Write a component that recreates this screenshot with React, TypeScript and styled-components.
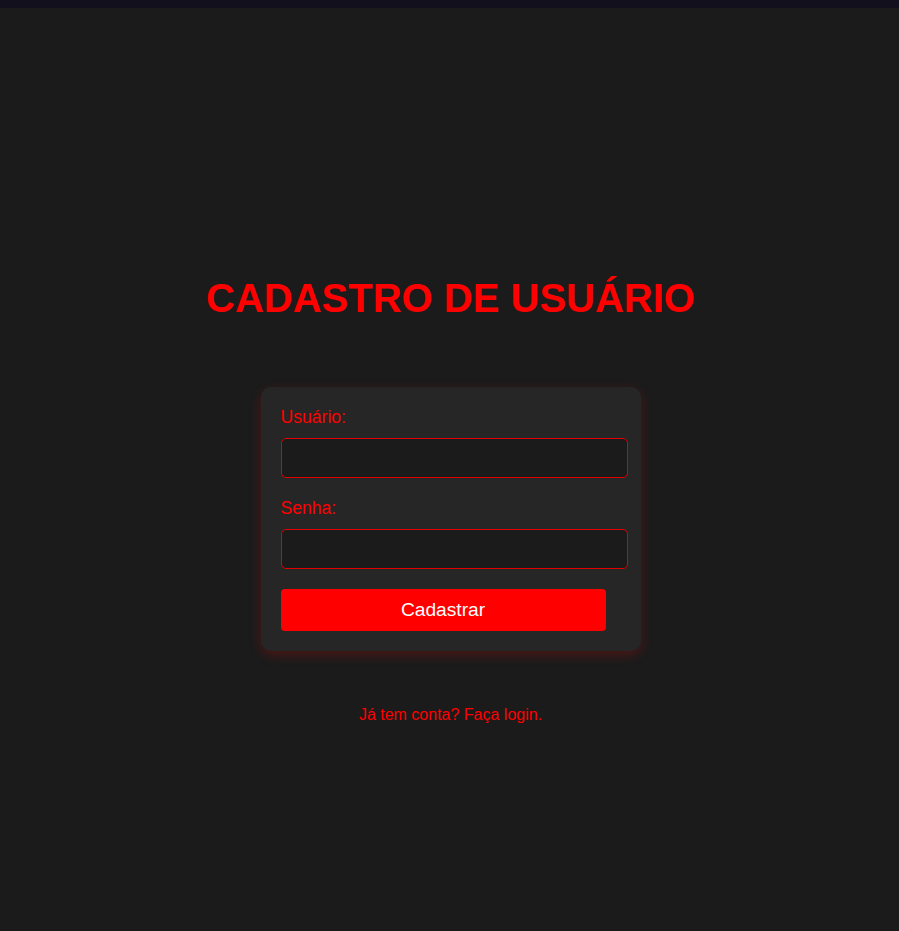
import React from "react";
import styled, { createGlobalStyle } from "styled-components";

const GlobalStyle = createGlobalStyle`
  html, body {
    margin: 0;
    padding: 0;
    background: #1b1b1b;
    font-family: "Liberation Sans", Arial, sans-serif;
  }
`;

const TopBar = styled.div`
  height: 8px;
  background: #11101c;
`;

const Page = styled.main`
  min-height: 923px;
  display: flex;
  flex-direction: column;
  align-items: center;
  padding-top: 267px;
  padding-left: 2px;
  box-sizing: border-box;
`;

const Title = styled.h1`
  margin: 0 0 66px;
  color: #ff0000;
  font-size: 40px;
  line-height: 46px;
  font-weight: 700;
  text-align: center;
`;

const Card = styled.form`
  width: 380px;
  box-sizing: border-box;
  padding: 20px;
  background: #262626;
  border-radius: 10px;
  box-shadow: 0 4px 12px rgba(255, 0, 0, 0.22);
  display: flex;
  flex-direction: column;
`;

const Label = styled.label`
  display: block;
  color: #ff0000;
  font-size: 17.6px;
  line-height: 20px;
  margin-bottom: 11px;
`;

const Input = styled.input`
  width: 347px;
  height: 40px;
  box-sizing: border-box;
  background: #1b1b1b;
  border: 1px solid #e00000;
  border-radius: 5px;
  color: #fff;
  padding: 0 10px;
  margin: 0 0 20px;
  font-family: inherit;
  font-size: 16px;
  outline: none;
`;

const Button = styled.button`
  width: 325px;
  height: 42px;
  box-sizing: border-box;
  background: #ff0000;
  color: #fff;
  border: none;
  border-radius: 4px;
  font-family: inherit;
  font-size: 19.2px;
  cursor: pointer;
`;

const LinkText = styled.a`
  margin-top: 55px;
  color: #ff0000;
  font-size: 16px;
  line-height: 18px;
  text-decoration: none;
`;

export default function App() {
  return (
    <>
      <GlobalStyle />
      <TopBar />
      <Page>
        <Title>CADASTRO DE USUÁRIO</Title>
        <Card onSubmit={(e) => e.preventDefault()}>
          <Label htmlFor="usuario">Usuário:</Label>
          <Input id="usuario" type="text" />
          <Label htmlFor="senha">Senha:</Label>
          <Input id="senha" type="password" />
          <Button type="submit">Cadastrar</Button>
        </Card>
        <LinkText href="#">Já tem conta? Faça login.</LinkText>
      </Page>
    </>
  );
}
